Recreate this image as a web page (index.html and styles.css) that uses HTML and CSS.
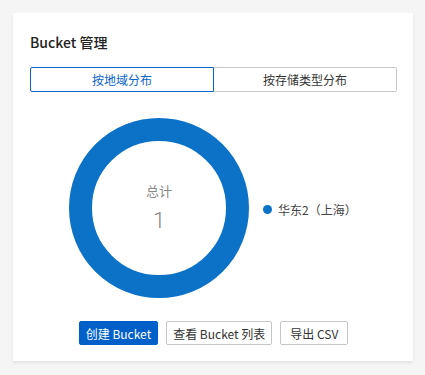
FILE: index.html
```html
<!DOCTYPE html>
<html lang="zh-CN">

<head>
  <meta charset="UTF-8">
  <meta name="viewport" content="width=device-width, initial-scale=1.0">
  <title>Bucket 管理</title>
  <link rel="stylesheet" href="styles.css">
</head>

<body>
  <div class="card">
    <h2 class="card-title">Bucket 管理</h2>

    <div class="tabs">
      <button class="tab active">按地域分布</button>
      <button class="tab">按存储类型分布</button>
    </div>

    <div class="chart">
      <div class="donut">
        <span class="donut-label">总计</span>
        <span class="donut-value">1</span>
      </div>
      <div class="legend">
        <span class="legend-dot"></span>
        <span class="legend-text">华东2（上海）</span>
      </div>
    </div>

    <div class="actions">
      <button class="btn primary">创建 Bucket</button>
      <button class="btn">查看 Bucket 列表</button>
      <button class="btn">导出 CSV</button>
    </div>
  </div>
</body>

</html>
```

FILE: styles.css
```css
body {
  font-family: "Noto Sans CJK SC", "Noto Sans", sans-serif;
  margin: 0;
  padding: 13px;
  background-color: #f5f5f5;
  color: #333;
}

.card {
  width: 400px;
  height: 348px;
  box-sizing: border-box;
  background-color: white;
  box-shadow: 0 2px 3px rgba(0, 0, 0, 0.08);
  padding: 19px 16px 0 17px;
}

.card-title {
  margin: 0;
  font-size: 14px;
  line-height: 20px;
  font-weight: 500;
  color: #222;
}

.tabs {
  display: flex;
  margin-top: 15px;
  height: 25px;
}

.tab {
  flex: 1;
  font-family: inherit;
  font-size: 12px;
  color: #333;
  background: white;
  border: 1px solid #c6c6c6;
  padding: 0;
  cursor: pointer;
}

.tab:first-child {
  border-radius: 2px 0 0 2px;
}

.tab:last-child {
  border-left: none;
  border-radius: 0 2px 2px 0;
}

.tab.active {
  border-color: #0a64c8;
  color: #0a64c8;
}

.chart {
  display: flex;
  align-items: center;
  margin-top: 26px;
  padding-left: 39px;
}

.donut {
  width: 180px;
  height: 180px;
  box-sizing: border-box;
  border: 23px solid #0b72c8;
  border-radius: 50%;
  display: flex;
  flex-direction: column;
  align-items: center;
  justify-content: center;
}

.donut-label {
  font-size: 13px;
  color: #888;
  line-height: 18px;
}

.donut-value {
  font-family: Roboto, "Noto Sans", sans-serif;
  font-weight: 300;
  font-size: 22px;
  color: #888;
  line-height: 26px;
  margin-top: 8px;
}

.legend {
  display: flex;
  align-items: center;
  margin-left: 14px;
  margin-top: 2px;
}

.legend-dot {
  width: 9px;
  height: 9px;
  border-radius: 50%;
  background-color: #0b72c8;
  margin-right: 6px;
}

.legend-text {
  font-size: 12px;
  color: #444;
}

.actions {
  display: flex;
  justify-content: center;
  gap: 8px;
  margin-top: 23px;
}

.btn {
  height: 24px;
  min-width: 68px;
  padding: 0 6px;
  font-family: inherit;
  font-size: 12px;
  color: #333;
  background: white;
  border: 1px solid #c6c6c6;
  border-radius: 2px;
  cursor: pointer;
}

.btn.primary {
  background-color: #0060c9;
  border-color: #0060c9;
  color: white;
}
```
